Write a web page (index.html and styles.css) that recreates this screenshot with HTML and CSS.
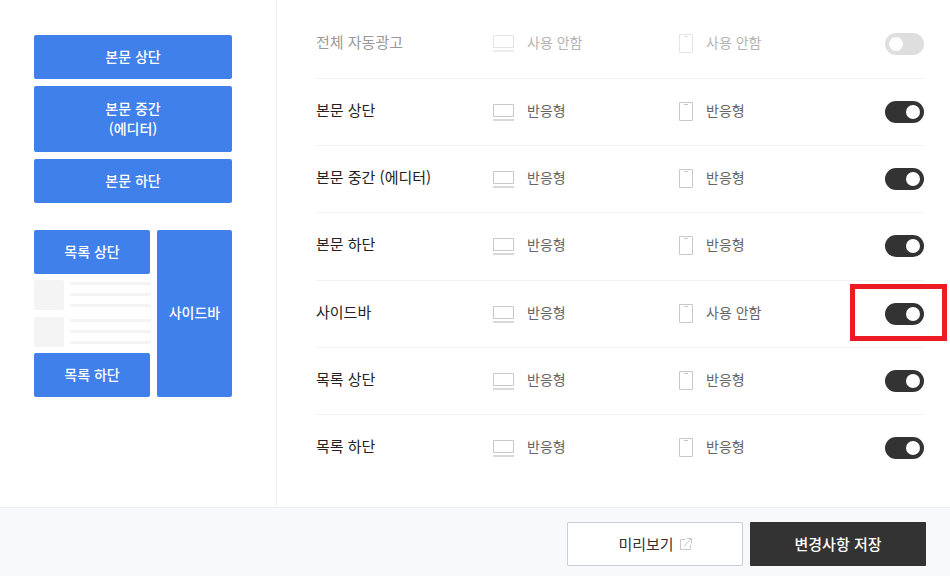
FILE: index.html
```html
<!DOCTYPE html>
<html lang="ko">
<head>
<meta charset="utf-8">
<title>자동광고 설정</title>
<link rel="stylesheet" href="styles.css">
</head>
<body>
<div class="page">
  <main class="main">
    <aside class="preview">
      <div class="slot h44">본문 상단</div>
      <div class="slot h66">본문 중간<br>(에디터)</div>
      <div class="slot h44">본문 하단</div>
      <div class="lower">
        <div class="lower-left">
          <div class="slot h44">목록 상단</div>
          <div class="ph"><span class="thumb"></span><span class="lines"><i></i><i></i><i></i></span></div>
          <div class="ph"><span class="thumb"></span><span class="lines"><i></i><i></i><i></i></span></div>
          <div class="slot h44 last">목록 하단</div>
        </div>
        <div class="slot side">사이드바</div>
      </div>
    </aside>
    <section class="settings">
      <div class="row off">
        <span class="name">전체 자동광고</span>
        <span class="cell"><svg class="ic-pc" viewBox="0 0 21 17"><path d="M.5.5h20v12H.5z" fill="none" stroke="currentColor"/><path class="base" d="M0 16h21" stroke="currentColor" stroke-width="2"/></svg>사용 안함</span>
        <span class="cell"><svg class="ic-mo" viewBox="0 0 14 19"><path d="M.5.5h13v18H.5z" fill="none" stroke="currentColor"/><path d="M5 2.5h4" stroke="currentColor"/></svg>사용 안함</span>
        <span class="toggle"></span>
      </div>
      <div class="row">
        <span class="name">본문 상단</span>
        <span class="cell"><svg class="ic-pc" viewBox="0 0 21 17"><path d="M.5.5h20v12H.5z" fill="none" stroke="currentColor"/><path class="base" d="M0 16h21" stroke="currentColor" stroke-width="2"/></svg>반응형</span>
        <span class="cell"><svg class="ic-mo" viewBox="0 0 14 19"><path d="M.5.5h13v18H.5z" fill="none" stroke="currentColor"/><path d="M5 2.5h4" stroke="currentColor"/></svg>반응형</span>
        <span class="toggle"></span>
      </div>
      <div class="row">
        <span class="name">본문 중간 (에디터)</span>
        <span class="cell"><svg class="ic-pc" viewBox="0 0 21 17"><path d="M.5.5h20v12H.5z" fill="none" stroke="currentColor"/><path class="base" d="M0 16h21" stroke="currentColor" stroke-width="2"/></svg>반응형</span>
        <span class="cell"><svg class="ic-mo" viewBox="0 0 14 19"><path d="M.5.5h13v18H.5z" fill="none" stroke="currentColor"/><path d="M5 2.5h4" stroke="currentColor"/></svg>반응형</span>
        <span class="toggle"></span>
      </div>
      <div class="row">
        <span class="name">본문 하단</span>
        <span class="cell"><svg class="ic-pc" viewBox="0 0 21 17"><path d="M.5.5h20v12H.5z" fill="none" stroke="currentColor"/><path class="base" d="M0 16h21" stroke="currentColor" stroke-width="2"/></svg>반응형</span>
        <span class="cell"><svg class="ic-mo" viewBox="0 0 14 19"><path d="M.5.5h13v18H.5z" fill="none" stroke="currentColor"/><path d="M5 2.5h4" stroke="currentColor"/></svg>반응형</span>
        <span class="toggle"></span>
      </div>
      <div class="row">
        <span class="name">사이드바</span>
        <span class="cell"><svg class="ic-pc" viewBox="0 0 21 17"><path d="M.5.5h20v12H.5z" fill="none" stroke="currentColor"/><path class="base" d="M0 16h21" stroke="currentColor" stroke-width="2"/></svg>반응형</span>
        <span class="cell"><svg class="ic-mo" viewBox="0 0 14 19"><path d="M.5.5h13v18H.5z" fill="none" stroke="currentColor"/><path d="M5 2.5h4" stroke="currentColor"/></svg>사용 안함</span>
        <span class="toggle marked"></span>
      </div>
      <div class="row">
        <span class="name">목록 상단</span>
        <span class="cell"><svg class="ic-pc" viewBox="0 0 21 17"><path d="M.5.5h20v12H.5z" fill="none" stroke="currentColor"/><path class="base" d="M0 16h21" stroke="currentColor" stroke-width="2"/></svg>반응형</span>
        <span class="cell"><svg class="ic-mo" viewBox="0 0 14 19"><path d="M.5.5h13v18H.5z" fill="none" stroke="currentColor"/><path d="M5 2.5h4" stroke="currentColor"/></svg>반응형</span>
        <span class="toggle"></span>
      </div>
      <div class="row last-row">
        <span class="name">목록 하단</span>
        <span class="cell"><svg class="ic-pc" viewBox="0 0 21 17"><path d="M.5.5h20v12H.5z" fill="none" stroke="currentColor"/><path class="base" d="M0 16h21" stroke="currentColor" stroke-width="2"/></svg>반응형</span>
        <span class="cell"><svg class="ic-mo" viewBox="0 0 14 19"><path d="M.5.5h13v18H.5z" fill="none" stroke="currentColor"/><path d="M5 2.5h4" stroke="currentColor"/></svg>반응형</span>
        <span class="toggle"></span>
      </div>
    </section>
  </main>
  <footer class="footer">
    <button class="btn ghost">미리보기<svg class="ic-ext" viewBox="0 0 12 12"><path d="M5.5 1.5H.5v10h10V6.5" fill="none" stroke="currentColor"/><path d="M4 8 11 1M6.5.5h5v5" fill="none" stroke="currentColor"/></svg></button>
    <button class="btn solid">변경사항 저장</button>
  </footer>
</div>
</body>
</html>
```
FILE: styles.css
```css
*, *::before, *::after { box-sizing: border-box; }
html, body { margin: 0; padding: 0; background: #fff; }
body { font-family: "Noto Sans CJK KR", "Noto Sans", sans-serif; font-size: 14px; color: #333; overflow: hidden; }
.page { width: 950px; height: 576px; display: flex; flex-direction: column; }
.main { flex: none; height: 507px; display: flex; }
.preview { flex: none; width: 277px; height: 507px; padding: 35px 44px 0 34px; border-right: 1px solid #f1f1f1; display: flex; flex-direction: column; gap: 7px; }
.slot { display: flex; align-items: center; justify-content: center; text-align: center; background: #4080ea; color: #fff; border-radius: 2px; font-size: 14px; font-weight: 500; line-height: 19.6px; padding-bottom: 1px; }
.h44 { height: 44px; flex: none; }
.h66 { height: 66px; flex: none; }
.lower { margin-top: 20px; display: flex; gap: 7px; height: 167px; }
.lower-left { flex: none; width: 116px; display: flex; flex-direction: column; }
.side { flex: 1; }
.ph { display: flex; gap: 6px; height: 30px; margin-top: 6px; margin-right: -1px; }
.ph + .ph { margin-top: 7px; }
.last { margin-top: 6px; }
.thumb { width: 30px; height: 30px; background: #f4f4f4; border-radius: 2px; flex: none; }
.lines { flex: 1; display: flex; flex-direction: column; justify-content: space-between; padding: 2px 0 3px; }
.lines i { display: block; height: 3px; background: #f4f4f4; }
.settings { flex: 1; padding: 11px 26px 0 39px; }
.row { height: 67.2px; padding-top: 20px; display: grid; grid-template-columns: 177px 186px 1fr 39px; align-items: start; border-bottom: 1px solid #f1f1f1; }
.row:first-child { height: 68px; }
.last-row { border-bottom: 0; }
.name { font-size: 15px; line-height: 22px; color: #222; }
.cell { display: flex; align-items: flex-start; font-size: 14px; line-height: 22px; color: #666; }
.ic-pc { width: 21px; height: 17px; margin: 5px 13px 0 0; color: #c8c8c8; flex: none; }
.ic-pc .base { opacity: .7; }
.ic-mo { width: 14px; height: 19px; margin: 3px 13px 0 0; color: #c8c8c8; flex: none; }
.toggle { position: relative; display: block; width: 39px; height: 22px; margin-top: 2px; border-radius: 11px; background: #333; }
.toggle::after { content: ""; position: absolute; top: 4px; right: 4px; width: 14px; height: 14px; border-radius: 50%; background: #fff; }
.marked::before { content: ""; position: absolute; left: -35px; top: -19px; width: 97px; height: 57px; border: 5px solid #ed1c24; }
.off .name { color: #999; }
.off .cell { color: #b4b4b4; }
.off .ic-pc { margin-top: 4px; color: #e4e4e4; }
.off .ic-mo { color: #e4e4e4; }
.off .toggle { background: #dedede; }
.off .toggle::after { right: auto; left: 4px; }
.footer { flex: 1; background: #f8f9fb; border-top: 1px solid #eceef1; display: flex; justify-content: flex-end; gap: 7px; padding: 14px 24px 0 0; }
.btn { width: 176px; height: 44px; border-radius: 1px; font-family: inherit; font-size: 15px; display: flex; align-items: center; justify-content: center; padding: 0 0 2px; }
.ghost { background: #fff; border: 1px solid #c5ced9; color: #333; }
.solid { background: #333; border: 0; color: #fff; font-weight: 500; }
.ic-ext { width: 12px; height: 12px; margin: 2px 0 0 6px; color: #c8c8c8; }
```
